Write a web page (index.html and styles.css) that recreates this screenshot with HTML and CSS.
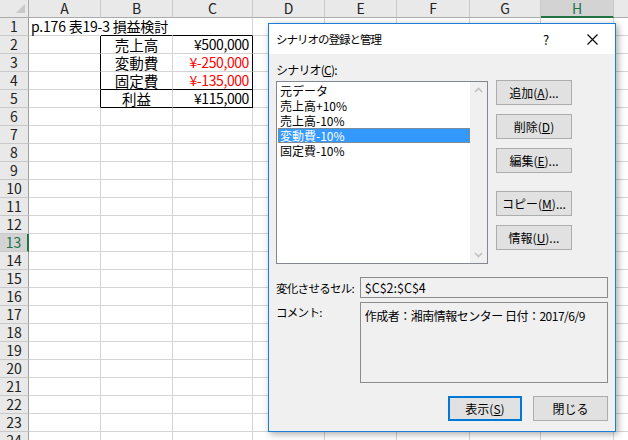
FILE: index.html
```html
<!DOCTYPE html>
<html lang="ja">

    <head>
        <meta charset="UTF-8">
        <title>シナリオの登録と管理</title>
        <link rel="stylesheet" href="styles.css">
    </head>

    <body>
        <!-- シート本体（セルはスクリプトで生成） -->
        <div class="sheet-wrap">
            <div class="sheet" id="sheet"></div>
        </div>

        <!-- ダイアログ -->
        <div class="dialog">
            <div class="dialog-title">
                <span class="title-text">シナリオの登録と管理</span>
                <span class="title-btn">?</span>
                <span class="title-btn">
                    <svg width="11" height="11" viewBox="0 0 11 11">
                        <path d="M0.5 0.5L10.5 10.5M10.5 0.5L0.5 10.5" stroke="#000" stroke-width="1.1" fill="none" />
                    </svg>
                </span>
            </div>

            <div class="dialog-body">
                <div class="label">シナリオ(<u>C</u>):</div>
                <div class="scenario-row">
                    <div class="listbox">
                        <ul class="list">
                            <li>元データ</li>
                            <li>売上高+10%</li>
                            <li>売上高-10%</li>
                            <li class="selected">変動費-10%</li>
                            <li>固定費-10%</li>
                        </ul>
                        <div class="scrollbar">
                            <svg width="17" height="17" viewBox="0 0 17 17">
                                <path d="M5 10L8.5 6.5L12 10" stroke="#c2c2c2" stroke-width="1.6" fill="none" />
                            </svg>
                            <svg width="17" height="17" viewBox="0 0 17 17">
                                <path d="M5 7L8.5 10.5L12 7" stroke="#c2c2c2" stroke-width="1.6" fill="none" />
                            </svg>
                        </div>
                    </div>
                    <div class="side-buttons">
                        <button class="btn">追加(<u>A</u>)...</button>
                        <button class="btn">削除(<u>D</u>)</button>
                        <button class="btn">編集(<u>E</u>)...</button>
                        <button class="btn gap-top">コピー(<u>M</u>)...</button>
                        <button class="btn">情報(<u>U</u>)...</button>
                    </div>
                </div>

                <div class="field-row">
                    <span class="field-label">変化させるセル:</span>
                    <div class="field">$C$2:$C$4</div>
                </div>
                <div class="field-row comment-row">
                    <span class="field-label">コメント:</span>
                    <div class="field comment">作成者：湘南情報センター 日付：2017/6/9</div>
                </div>

                <div class="footer">
                    <button class="btn primary">表示(<u>S</u>)</button>
                    <button class="btn">閉じる</button>
                </div>
            </div>
        </div>

        <script>
            // セルの中身
            const cells = {
                A1: ["p.176 表19-3 損益検討", "title"],
                B2: ["売上高", "center"],
                C2: ["¥500,000", "num"],
                B3: ["変動費", "center"],
                C3: ["¥-250,000", "num red"],
                B4: ["固定費", "center"],
                C4: ["¥-135,000", "num red"],
                B5: ["利益", "center"],
                C5: ["¥115,000", "num"]
            }

            const letters = ["A", "B", "C", "D", "E", "F", "G", "H", "I"]
            const sheet = document.getElementById("sheet")

            function add(cls, text) {
                const div = document.createElement("div")
                div.className = cls
                if (text) div.textContent = text
                sheet.append(div)
            }

            // 見出し行
            add("corner")
            letters.forEach(function (l) {
                add(l === "H" ? "col-head active" : "col-head", l)
            })

            for (let row = 1; row <= 24; row++) {
                add(row === 13 ? "row-head active" : "row-head", row)
                letters.forEach(function (col) {
                    let cls = "cell"
                    // A1 の文字がはみ出すので罫線を消す
                    if (row === 1 && (col === "A" || col === "B")) cls += " hide-right"
                    // B2:C5 の罫線
                    if (row >= 2 && row <= 5 && (col === "A" || col === "C")) cls += " edge-right"
                    if ((row === 1 || row === 4 || row === 5) && (col === "B" || col === "C")) cls += " edge-bottom"
                    const data = cells[col + row]
                    if (data) cls += " " + data[1]
                    add(cls, data ? data[0] : "")
                })
            }
        </script>
    </body>

</html>
```

FILE: styles.css
```css
body {
    margin: 0;
    overflow: hidden;
    background-color: #fff;
    font-family: "Noto Sans CJK JP", sans-serif;
}

/* シート */
.sheet-wrap {
    width: 628px;
    height: 440px;
    overflow: hidden;
}

.sheet {
    display: grid;
    grid-template-columns: 29px 72px 72px 80px 72px 72px 73px 71px 73px 72px;
    grid-auto-rows: 18px;
}

.sheet > div {
    box-sizing: border-box;
    white-space: nowrap;
    line-height: 17px;
}

.corner {
    display: flex;
    justify-content: flex-end;
    align-items: flex-end;
    padding: 0 3px 4px 0;
    background-color: #e9e9e9;
    border-right: 1px solid #ababab;
    border-bottom: 1px solid #ababab;
}

.corner::after {
    content: "";
    border-style: solid;
    border-width: 0 0 9px 9px;
    border-color: transparent transparent #c8c8c8 transparent;
}

.col-head {
    text-align: center;
    font-size: 14px;
    color: #222;
    background-color: #e9e9e9;
    border-right: 1px solid #c9c9c9;
    border-bottom: 1px solid #ababab;
}

.row-head {
    text-align: center;
    font-size: 14px;
    color: #222;
    background-color: #e9e9e9;
    border-right: 1px solid #9e9e9e;
    border-bottom: 1px solid #c9c9c9;
}

.col-head.active {
    background-color: #d3d3d3;
    color: #217346;
    border-bottom: 2px solid #217346;
}

.row-head.active {
    background-color: #d3d3d3;
    color: #217346;
    border-right: 2px solid #217346;
}

.cell {
    font-size: 14.5px;
    color: #000;
    padding: 0 2px;
    border-right: 1px solid #d4d4d4;
    border-bottom: 1px solid #d4d4d4;
}

.cell.hide-right {
    border-right-color: #fff;
}

.cell.edge-right {
    border-right-color: #000;
}

.cell.edge-bottom {
    border-bottom-color: #000;
}

.title {
    font-size: 14px;
    letter-spacing: -0.2px;
}

.center {
    text-align: center;
}

.num {
    text-align: right;
    padding-right: 3px;
    font-size: 14px;
    letter-spacing: -0.4px;
}

.red {
    color: #f00;
}

/* ダイアログ */
.dialog {
    position: absolute;
    left: 268px;
    top: 23px;
    width: 348px;
    height: 409px;
    box-sizing: border-box;
    display: flex;
    flex-direction: column;
    background-color: #f0f0f0;
    border: 1px solid #1c7fd6;
    box-shadow: 2px 2px 7px rgba(0, 0, 0, 0.35);
    font-size: 12px;
    color: #000;
}

.dialog-title {
    display: flex;
    align-items: center;
    height: 30px;
    padding-left: 7px;
    background-color: #fff;
}

.title-text {
    flex: 1;
    font-size: 11.5px;
    letter-spacing: -1px;
}

.title-btn {
    display: flex;
    justify-content: center;
    align-items: center;
    width: 46px;
    height: 30px;
    font-size: 13px;
}

.dialog-body {
    display: flex;
    flex-direction: column;
    padding: 8px 7px 0 7px;
}

.label {
    line-height: 16px;
    margin-bottom: 3px;
    letter-spacing: -0.8px;
}

.scenario-row {
    display: flex;
}

.listbox {
    display: flex;
    width: 212px;
    height: 183px;
    box-sizing: border-box;
    border: 1px solid #828790;
    background-color: #fff;
}

.list {
    flex: 1;
    list-style: none;
    margin: 0;
    padding: 1px 0 0 1px;
    font-size: 12px;
}

.list li {
    height: 15px;
    line-height: 15px;
    padding-left: 2px;
}

.list li.selected {
    background-color: #3399ff;
    color: #fff;
    outline: 1px dotted #c4803a;
    outline-offset: -1px;
}

.scrollbar {
    display: flex;
    flex-direction: column;
    justify-content: space-between;
    width: 17px;
    background-color: #f0f0f0;
}

.side-buttons {
    display: flex;
    flex-direction: column;
    gap: 9px;
    margin: -1px 0 0 8px;
}

.btn {
    width: 76px;
    height: 25px;
    padding: 0;
    box-sizing: border-box;
    background-color: #e1e1e1;
    border: 1px solid #adadad;
    font-family: "Noto Sans CJK JP", sans-serif;
    font-size: 12px;
    color: #000;
}

.gap-top {
    margin-top: 9px;
}

.field-row {
    display: flex;
    align-items: center;
    margin-top: 13px;
}

.comment-row {
    align-items: flex-start;
    margin-top: 4px;
}

.field-label {
    width: 84px;
    white-space: nowrap;
    font-size: 11.5px;
    letter-spacing: -0.7px;
}

.comment-row .field-label {
    padding-top: 2px;
}

.field {
    width: 249px;
    height: 21px;
    box-sizing: border-box;
    padding-left: 4px;
    line-height: 19px;
    font-size: 12.5px;
    white-space: nowrap;
    border: 1px solid #8c8c8c;
}

.field.comment {
    height: 81px;
    padding-top: 5px;
    line-height: 15px;
    font-size: 12px;
    letter-spacing: -0.5px;
}

.footer {
    display: flex;
    justify-content: flex-end;
    gap: 11px;
    margin-top: 13px;
}

.footer .btn {
    width: 75px;
}

.btn.primary {
    width: 74px;
    border: 2px solid #0078d7;
}
```
